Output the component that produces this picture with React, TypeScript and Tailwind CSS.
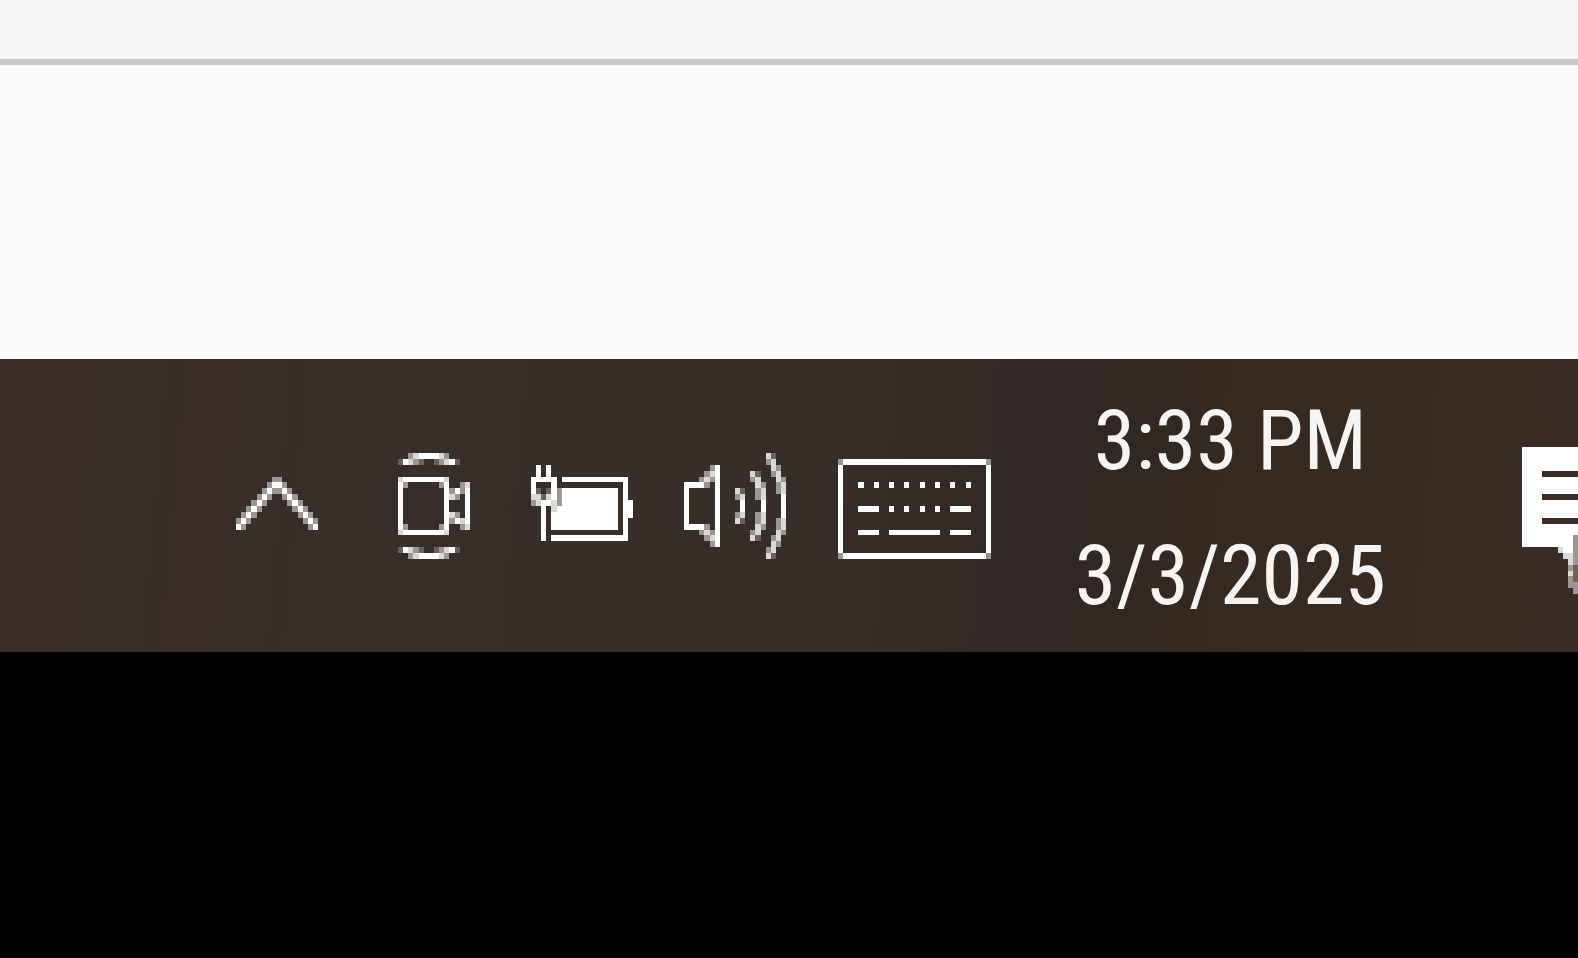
const shades: Record<string, number> = {
  "#": 1,
  o: 0.82,
  "+": 0.5,
  "-": 0.25,
};

const chevron = [
  "",
  "",
  "",
  "",
  ".......++.......",
  "......+##+......",
  ".....+#++#+.....",
  "....+#+..+#+....",
  "...+#+....+#+...",
  "..+#+......+#+..",
  ".+#+........+#+.",
  "+#+..........+#+",
  "#+............+#",
  "",
  "",
  "",
  "",
  "",
];

const camera = [
  "..+o####o+....",
  "-#o+-..-+o#-..",
  "",
  "",
  "o########o....",
  "#+......+#..+o",
  "#........#+#+#",
  "#........#o+.#",
  "#........#...#",
  "#........#...#",
  "#........#o+.#",
  "#........#+#o#",
  "#+......+#..+o",
  "o########o....",
  "",
  "",
  "-#o+-..-+o#-..",
  "..+o####o+....",
];

const battery = [
  "",
  "",
  ".#.#................",
  ".#.#................",
  "#####.#############.",
  "#...#.............#.",
  "#-.-#+###########.#.",
  "oo-o#+###########.#.",
  "+o##o+###########.##",
  "..#.o############.##",
  "..#.#############.##",
  "..#.#############.#.",
  "..#.#############.#.",
  "..#...............#.",
  "..#.###############.",
  "",
  "",
  "",
];

const speaker = [
  "................o-..",
  "................+o..",
  ".....+#..........o+.",
  "....+o#......o-..+o.",
  "...+o+#......+o...o+",
  "####+.#.......o+..+o",
  "#.....#...o-..+o..+o",
  "#.....#...+o..+o...#",
  "#.....#....#...#...#",
  "#.....#....#...#...#",
  "#.....#...+o..+o...#",
  "#.....#...o-..+o..+o",
  "####+.#.......o+..+o",
  "...+o+#......+o...o+",
  "....+o#......o-..+o.",
  ".....+#..........o+.",
  "................+o..",
  "................o-..",
];

const keyboard = [
  "",
  "+############################+",
  "#............................#",
  "#............................#",
  "#............................#",
  "#...#..#..#..#..#..#..#..#...#",
  "#............................#",
  "#............................#",
  "#............................#",
  "#...####..#..#..#..#..####...#",
  "#............................#",
  "#............................#",
  "#............................#",
  "#...####..##########..####...#",
  "#............................#",
  "#............................#",
  "#............................#",
  "+############################+",
];

const notifications = [
  "",
  "",
  "",
  "",
  "",
  "###########",
  "###########",
  "###########",
  "###########",
  "####.......",
  "###########",
  "###########",
  "###########",
  "####.......",
  "###########",
  "###########",
  "###########",
  "####.......",
  "###########",
  "###########",
  "##########+",
  "##########+",
  ".......o##+",
  "........oo+",
  ".........o+",
  ".........+-",
  ".........o-",
  ".........+-",
  ".........++",
  "..........+",
];

function PixelIcon({ rows, className }: { rows: string[]; className: string }) {
  const cols = Math.max(...rows.map((row) => row.length));

  return (
    <svg
      viewBox={`0 0 ${cols} ${rows.length}`}
      preserveAspectRatio="none"
      shapeRendering="crispEdges"
      fill="currentColor"
      aria-hidden="true"
      className={className}
    >
      {rows.flatMap((row, y) =>
        // one rect per run of equal shade
        [...row.matchAll(/#+|o+|\++|-+/g)].map((run) => (
          <rect
            key={`${run.index}-${y}`}
            x={run.index}
            y={y}
            width={run[0].length}
            height={1}
            opacity={shades[run[0][0]]}
          />
        )),
      )}
    </svg>
  );
}

const trayItems = [
  { label: "Meet Now", rows: camera, size: "h-[106px] w-[72px]", space: "ml-20" },
  { label: "Battery", rows: battery, size: "h-[106px] w-[102px]", space: "ml-[61px]" },
  { label: "Volume", rows: speaker, size: "h-[106px] w-[102px]", space: "ml-[51px]" },
  { label: "Touch keyboard", rows: keyboard, size: "h-[106px] w-[153px]", space: "ml-[52px]" },
];

export default function App() {
  return (
    <div className="flex min-h-screen flex-col overflow-hidden bg-black">
      <header className="h-[65px] border-b-[6px] border-[#cacaca] bg-[#f7f7f7]" />
      <main className="h-[294px] bg-[#fafafc]" />
      <footer className="flex h-[293px] items-center justify-end bg-[linear-gradient(95deg,#3c2e26_0%,#392e28_8%,#3a2e27_14%,#382e2a_20%,#372d29_52%,#302824_68%,#36291f_77%,#3b2d25_100%)] text-white">
        <button type="button" aria-label="Show hidden icons" className="shrink-0">
          <PixelIcon rows={chevron} className="block h-[106px] w-[82px]" />
        </button>
        {trayItems.map((item) => (
          <button
            key={item.label}
            type="button"
            aria-label={item.label}
            className={`shrink-0 ${item.space}`}
          >
            <PixelIcon rows={item.rows} className={`block ${item.size}`} />
          </button>
        ))}
        <button
          type="button"
          className="ml-[84px] shrink-0 whitespace-nowrap pt-1 text-center font-['Roboto_Condensed','Open_Sans',sans-serif] text-[84px] leading-[135px] text-[#f8f4f2]"
        >
          <span className="block">3:33 PM</span>
          <span className="block">3/3/2025</span>
        </button>
        <button type="button" aria-label="Notifications" className="ml-[136px] shrink-0">
          <PixelIcon rows={notifications} className="block h-[176px] w-14" />
        </button>
      </footer>
      <div className="flex-1 bg-black" />
    </div>
  );
}
